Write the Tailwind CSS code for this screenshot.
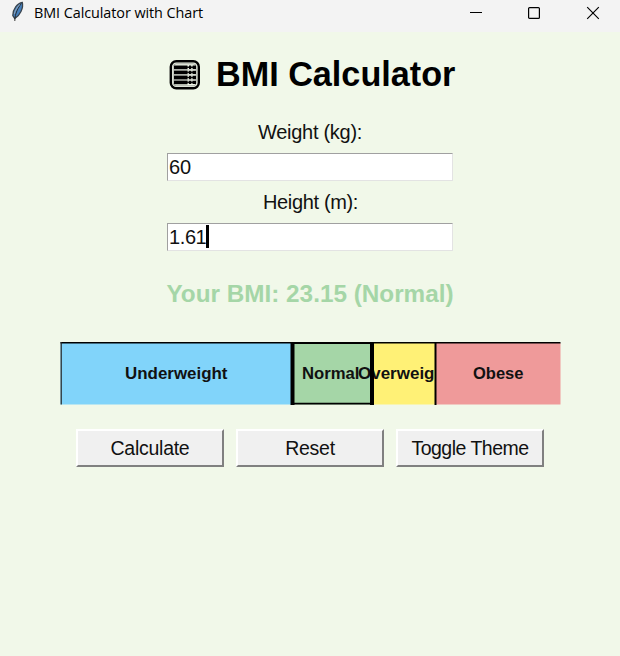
<!DOCTYPE html>
<html lang="en">
<head>
<meta charset="utf-8">
<title>BMI Calculator with Chart</title>
<script src="https://cdn.jsdelivr.net/npm/@tailwindcss/browser@4"></script>
</head>
<body class="w-[620px] h-[656px] overflow-hidden bg-[#f1f8e9] font-['Liberation_Sans',Arial,sans-serif] text-[#111]">
<header class="h-8 bg-[#f3f3f3] flex items-start justify-between">
  <div class="flex pl-[10px]">
    <svg class="w-4 h-[22px] mt-[1px]" viewBox="0 0 16 22">
      <path d="M12.3 1.4C7.5 2 3 8 2.8 14.5L4.8 17.5C9.8 14.5 13.8 7 12.3 1.4Z" fill="#4680bd" stroke="#3a444e" stroke-width="1.3"/>
      <path d="M11.3 2.5C8 7 5 12 4.8 20" fill="none" stroke="#222" stroke-width=".9"/>
      <path d="M9.7 3.5C7 6.5 5 10 4.3 13" fill="none" stroke="#8fa5bb" stroke-width="1"/>
    </svg>
    <h1 class="font-['Open_Sans','Noto_Sans',sans-serif] text-[14.4px] leading-[26px] ml-[8px] tracking-[-0.07px] whitespace-nowrap text-black">BMI Calculator with Chart</h1>
  </div>
  <div class="flex pr-[20px] pt-[6px] gap-[45px]">
    <svg class="w-[14px] h-[14px]" viewBox="0 0 14 14"><path d="M2 6.5H14" stroke="#000"/></svg>
    <svg class="w-[14px] h-[14px]" viewBox="0 0 14 14"><rect x="1.6" y="1.6" width="10.8" height="10.8" rx="1" fill="none" stroke="#000" stroke-width="1.2"/></svg>
    <svg class="w-[14px] h-[14px]" viewBox="0 0 14 14"><path d="M1.2 1.2L12.8 12.8M12.8 1.2L1.2 12.8" stroke="#000" stroke-width="1.15"/></svg>
  </div>
</header>
<main class="flex flex-col items-center">
  <div class="self-start flex items-center ml-[169px] mt-[22px] h-10">
    <svg class="w-[31px] h-[30px] mt-[2px]" viewBox="0 0 31 30">
      <rect x="1.8" y="1.3" width="28" height="27" rx="5.5" fill="none" stroke="#000" stroke-width="2.4"/>
      <rect x="4.2" y="3.8" width="23" height="22" rx="3" fill="none" stroke="#777" stroke-width=".6"/>
      <path d="M5 7.3H18.5M5 12.4H18.5M5 17.5H18.5M5 22.4H18.5" stroke="#000" stroke-width="3.8"/>
      <path d="M18 7.3H26.5M18 12.4H26.5M18 17.5H26.5M18 22.4H26.5" stroke="#111" stroke-width="1.6"/>
      <path d="M20 7.3H22.2M20 12.4H22.2M20 17.5H22.2M20 22.4H22.2M23.6 7.3H27M23.6 12.4H27M23.6 17.5H27M23.6 22.4H27" stroke="#000" stroke-width="3.4"/>
      <path d="M5 9.9H27M5 15H27M5 20H27" stroke="#999" stroke-width=".6"/>
    </svg>
    <h2 class="ml-[16px] text-[34.2px] font-bold leading-10 whitespace-nowrap text-black">BMI Calculator</h2>
  </div>
  <label class="mt-[26px] h-6 text-[20px] leading-6 tracking-[-0.28px] whitespace-nowrap">Weight (kg):</label>
  <div class="mt-[9px] w-[286px] h-[28px] bg-white border border-t-[#a0a0a0] border-l-[#a0a0a0] border-b-[#e3e3e3] border-r-[#e3e3e3] flex items-center pl-[1px] text-[20px] pb-px">60</div>
  <label class="mt-[9px] h-6 text-[20px] leading-6 tracking-[-0.35px] pl-px whitespace-nowrap">Height (m):</label>
  <div class="mt-[9px] w-[286px] h-[28px] bg-white border border-t-[#a0a0a0] border-l-[#a0a0a0] border-b-[#e3e3e3] border-r-[#e3e3e3] flex items-center pl-[1px] text-[20px] pb-px"><span class="tracking-[-0.4px]">1.61</span><span class="w-[2.5px] h-[23px] bg-black"></span></div>
  <p class="mt-[27px] h-8 text-[24.3px] leading-8 font-bold text-[#a5d6a7] whitespace-nowrap">Your BMI: 23.15 (Normal)</p>
  <svg class="mt-[32px] w-[501px] h-[63px] text-[17px] font-bold" viewBox="0 0 501 63">
    <rect x=".5" y="1" width="232" height="61.5" fill="#81d4fa"/>
    <rect x="232" y="1" width="80" height="61.5" fill="#a5d6a7"/>
    <rect x="312" y="1" width="64" height="61.5" fill="#fff176"/>
    <rect x="376" y="1" width="124.5" height="61.5" fill="#ef9a9a"/>
    <path d="M.5 .75H500.5" stroke="#000" stroke-width="1.3"/>
    <path d="M1.2 0V62.5" stroke="#222" stroke-width="1.2"/>
    <path d="M232.5 0V63M312 0V63" stroke="#000" stroke-width="4"/>
    <path d="M232 1.2H312M232 61.7H312" stroke="#000" stroke-width="1.8"/>
    <path d="M375.5 0V63" stroke="#000" stroke-width="2"/>
    <g fill="#111">
      <text x="65" y="37.4" textLength="102.5" lengthAdjust="spacingAndGlyphs">Underweight</text>
      <text x="242" y="37.4" textLength="57.5" lengthAdjust="spacingAndGlyphs">Normal</text>
      <text x="298" y="37.4" textLength="76.5" lengthAdjust="spacingAndGlyphs">Overweig</text>
      <text x="413" y="37.4" textLength="50.5" lengthAdjust="spacingAndGlyphs">Obese</text>
    </g>
    <path d="M312 26V46" stroke="#000" stroke-width="4"/>
  </svg>
  <div class="mt-[24px] flex gap-3 text-[19.5px] tracking-[-0.27px]">
    <button class="w-[148px] h-[38px] pt-px bg-[#f0f0f0] border-2 border-t-white border-l-white border-b-[#808080] border-r-[#808080] whitespace-nowrap">Calculate</button>
    <button class="w-[148px] h-[38px] pt-px bg-[#f0f0f0] border-2 border-t-white border-l-white border-b-[#808080] border-r-[#808080] whitespace-nowrap">Reset</button>
    <button class="w-[148px] h-[38px] pt-px bg-[#f0f0f0] border-2 border-t-white border-l-white border-b-[#808080] border-r-[#808080] whitespace-nowrap tracking-[-0.5px]">Toggle Theme</button>
  </div>
</main>
</body>
</html>
